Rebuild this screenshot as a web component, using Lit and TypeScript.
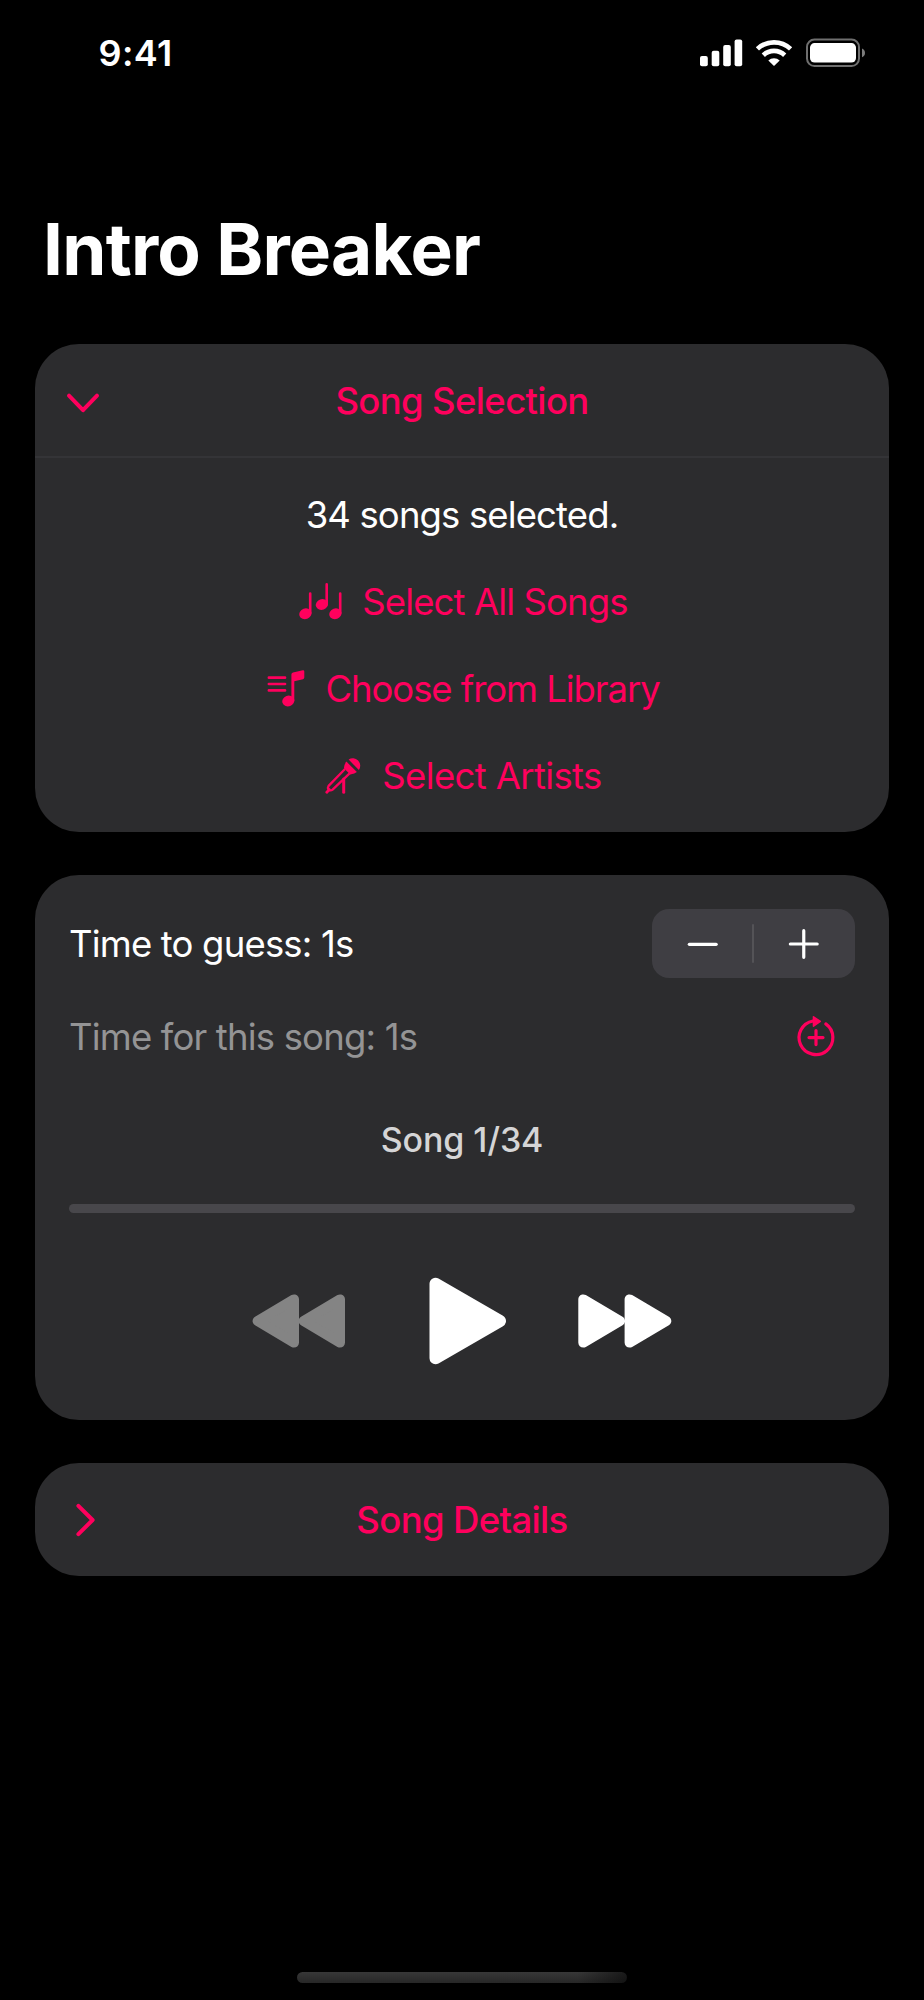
import { LitElement, html, css, svg } from "lit";
import { customElement, property, state } from "lit/decorators.js";

@customElement("status-bar")
class StatusBar extends LitElement {
  static styles = css`
    :host { display: flex; align-items: center; justify-content: space-between; height: 105px; padding: 0 57px 0 98.5px; color: #fff; }
    .time { font-size: 36px; font-weight: 600; letter-spacing: 0.4px; line-height: 44px; }
    svg { display: block; }
  `;
  render() {
    return html`
      <span class="time">9:41</span>
      <svg width="167" height="30" viewBox="700 37.5 167 30" fill="#fff">
        <rect x="700" y="55.6" width="7.8" height="10.2" rx="2" />
        <rect x="711.7" y="50.2" width="7.6" height="15.6" rx="2" />
        <rect x="723.2" y="44.6" width="7.6" height="21.2" rx="2" />
        <rect x="734.6" y="39" width="7.6" height="26.8" rx="2" />
        <g transform="translate(756 39)" fill="none" stroke="#fff" stroke-width="4.7">
          <path d="M1.4 9.4A24.2 24.2 0 0 1 34.6 9.4" />
          <path d="M7.3 15.7A15.6 15.6 0 0 1 28.7 15.7" />
          <path d="M12.3 20.9A8.4 8.4 0 0 1 23.7 20.9L18 26.6Z" fill="#fff" stroke="none" />
        </g>
        <rect x="807" y="39" width="52" height="26.6" rx="7.5" fill="none" stroke="#6f6f6f" stroke-width="2" />
        <rect x="810" y="42.6" width="46" height="19.4" rx="4.6" />
        <path d="M862 48q3 1.4 3 4.4t-3 4.4z" fill="#7c7c7c" />
      </svg>
    `;
  }
}

@customElement("disclosure-header")
class DisclosureHeader extends LitElement {
  @property() heading = "";
  @property({ type: Boolean, reflect: true }) open = false;

  static styles = css`
    :host { display: grid; grid-template-columns: 60px 1fr 60px; align-items: center; height: 113px; color: #ff005d; }
    :host([open]) { height: 112px; border-bottom: 2px solid #343437; }
    svg { display: block; margin-left: 24px; }
    .label { text-align: center; font-size: 36.5px; line-height: 46px; font-weight: 500; letter-spacing: -0.65px; }
    :host([open]) .label { padding-top: 1px; }
    :host([open]) svg { margin-top: 1px; }
  `;
  render() {
    return html`
      <svg width="48" height="48" viewBox="0 0 48 48" fill="none" stroke="#ff005d" stroke-width="4" stroke-linecap="round" stroke-linejoin="round">
        ${this.open ? svg`<path d="M10 18.6L24 33.2L38 18.6" />` : svg`<path d="M19.4 9.8L33.6 24L19.4 38.2" />`}
      </svg>
      <span class="label">${this.heading}</span>
    `;
  }
}

const noteHead = (cx: number, cy: number, rx = 6.2, ry = 5.3) =>
  svg`<ellipse cx=${cx} cy=${cy} rx=${rx} ry=${ry} transform=${`rotate(-20 ${cx} ${cy})`} />`;

const notesIcon = html`
  <svg width="43" height="37" viewBox="0 0 43 37" fill="#ff005d">
    ${noteHead(6.4, 30.8)}${noteHead(22.9, 21.5)}${noteHead(36.4, 30.8)}
    <g fill="none" stroke="#ff005d" stroke-width="2.6" stroke-linecap="round">
      <path d="M11.2 10.6V30M27.7 1.4V20.6M41.2 10.6V30" />
    </g>
  </svg>`;

const libraryIcon = html`
  <svg width="38" height="37" viewBox="0 0 38 37" fill="#ff005d">
    ${noteHead(21.3, 31, 6.1, 5.4)}
    <path d="M24.4 4.4Q24.4 2.7 26 2.4L35.8 .2Q37.3 0 37.3 1.4V7.6Q37.3 8.9 36 9.2L27.3 11.3V31H24.4Z" />
    <path d="M1.9 7.7H18M1.9 14H18M1.9 20.4H18" fill="none" stroke="#ff005d" stroke-width="2.7" stroke-linecap="round" />
  </svg>`;

const micIcon = html`
  <svg width="37" height="38" viewBox="0 0 37 38" fill="#ff005d">
    <path d="M23.6 2.6A7.4 7.4 0 0 1 33.9 12.9Z" />
    <path d="M21.4 4.6L31.9 15.1Q30 16.8 25.2 17.4L18.9 11.2Q19.5 6.6 21.4 4.6Z" />
    <path d="M20 12L3.6 28.9Q2.5 30.6 3.4 32.2L4.8 33.3Q6.2 33.7 7.6 32.6L24.6 16.4" fill="none" stroke="#ff005d" stroke-width="2.3" stroke-linejoin="round" />
    <path d="M4.2 32.6L1.8 35.2" stroke="#ff005d" stroke-width="2.8" stroke-linecap="round" />
    <path d="M18.7 22V35.3" stroke="#ff005d" stroke-width="3" stroke-linecap="round" />
  </svg>`;

@customElement("song-selection")
class SongSelection extends LitElement {
  @property({ type: Number }) count = 0;

  static styles = css`
    :host { display: block; }
    .body { padding: 13px 0 13px; font-size: 36.5px; }
    .row { display: flex; align-items: center; justify-content: center; gap: 20px; height: 87px; line-height: 46px; white-space: pre; }
    .count { color: #fff; letter-spacing: -0.87px; }
    .action { color: #ff005d; padding-left: 3px; }
    .all { letter-spacing: -0.89px; }
    .library { letter-spacing: -1.07px; }
    .artists { letter-spacing: -0.64px; }
    svg { display: block; }
  `;
  render() {
    return html`
      <disclosure-header heading="Song Selection" open></disclosure-header>
      <div class="body">
        <div class="row count">${this.count} songs selected.</div>
        <div class="row action all">${notesIcon}<span>Select All Songs</span></div>
        <div class="row action library">${libraryIcon}<span>Choose from Library</span></div>
        <div class="row action artists">${micIcon}<span>Select Artists</span></div>
      </div>
    `;
  }
}

@customElement("song-player")
class SongPlayer extends LitElement {
  @property({ type: Number }) total = 0;
  @state() private seconds = 1;
  @state() private track = 1;

  static styles = css`
    :host { display: flex; flex-direction: column; height: 511px; padding: 34px 34px 0; color: #fff; }
    .row { display: flex; justify-content: space-between; align-items: center; font-size: 36.5px; line-height: 46px; letter-spacing: -0.82px; }
    .row span { padding-top: 1px; }
    .stepper { display: flex; align-items: center; width: 203px; height: 69px; border-radius: 17px; background: #3f3e43; }
    .stepper svg { flex: 1; }
    .split { width: 2px; height: 39px; margin: 0 1px 0 -1px; background: #545357; border-radius: 1px; }
    .current { height: 46px; margin-top: 35px; color: #949495; }
    .current svg { margin: 0 17px 0 0; }
    .track { margin-top: 58px; text-align: center; font-size: 34px; line-height: 46px; font-weight: 500; letter-spacing: -0.08px; color: #d5d5d6; }
    .progress { height: 9px; margin-top: 41px; border-radius: 5px; background: #48474b; }
    .controls { display: flex; align-items: center; justify-content: center; height: 88px; margin: 64px 1px 0 0; }
    .play { margin: 0 71px 0 84px; }
    svg { display: block; }
  `;
  render() {
    return html`
      <div class="row">
        <span>Time to guess: ${this.seconds}s</span>
        <div class="stepper">
          <svg height="69" viewBox="0 0 101 69" stroke="#fff" stroke-width="3.2" stroke-linecap="round"><path d="M37.5 35.3H64.5" /></svg>
          <div class="split"></div>
          <svg height="69" viewBox="0 0 101 69" stroke="#fff" stroke-width="3.2" stroke-linecap="round"><path d="M35.5 35H62.5M49 21.6V48.4" /></svg>
        </div>
      </div>
      <div class="row current">
        <span>Time for this song: ${this.seconds}s</span>
        <svg width="44" height="46" viewBox="-22 -24.6 44 46" fill="none" stroke="#ff005d" stroke-width="3.2" stroke-linecap="round" stroke-linejoin="round">
          <path d="M-3 -16.6A16.9 16.9 0 1 0 9.8 -13.7" />
          <path d="M-7 0H7M0 -7V7" />
          <path d="M-2.5 -20.8V-11.4L4.3 -16.3Z" fill="#ff005d" stroke-width="1.6" />
        </svg>
      </div>
      <div class="track">Song ${this.track}/${this.total}</div>
      <div class="progress"></div>
      <div class="controls">
        <svg width="93" height="54" viewBox="0 0 93 54" fill="#848484" stroke="#848484" stroke-width="10" stroke-linejoin="round">
          <path d="M42 5.4V48.6L5.6 27Z" /><path d="M88 5.4V48.6L51.6 27Z" />
        </svg>
        <svg class="play" width="78" height="88" viewBox="0 0 78 88" fill="#fff" stroke="#fff" stroke-width="12" stroke-linejoin="round">
          <path d="M6.5 6.8V81.2L71 44Z" />
        </svg>
        <svg width="94" height="54" viewBox="0 0 94 54" fill="#fff" stroke="#fff" stroke-width="10" stroke-linejoin="round">
          <path d="M5.3 5.4V48.6L42 27Z" /><path d="M51.6 5.4V48.6L88.3 27Z" />
        </svg>
      </div>
    `;
  }
}

@customElement("app-root")
class AppRoot extends LitElement {
  static styles = css`
    :host { display: flex; flex-direction: column; box-sizing: border-box; height: 2000px; background: #000; font-family: Inter, "Liberation Sans", sans-serif; }
    h1 { margin: 101px 0 52px 43px; color: #fff; font-size: 71px; line-height: 86px; font-weight: 700; letter-spacing: -0.75px; }
    .cards { display: flex; flex-direction: column; gap: 43px; flex: 1; margin: 0 35px; }
    .card { display: block; border-radius: 44px; background: #2c2c2e; }
    .home { width: 330px; height: 11px; margin: 0 auto 17px; border-radius: 6px; background: linear-gradient(to right, transparent 85%, #0008), linear-gradient(#373737, #272727); }
  `;
  render() {
    return html`
      <status-bar></status-bar>
      <h1>Intro Breaker</h1>
      <main class="cards">
        <song-selection class="card" .count=${34}></song-selection>
        <div class="card"><song-player .total=${34}></song-player></div>
        <div class="card"><disclosure-header heading="Song Details"></disclosure-header></div>
      </main>
      <div class="home"></div>
    `;
  }
}
